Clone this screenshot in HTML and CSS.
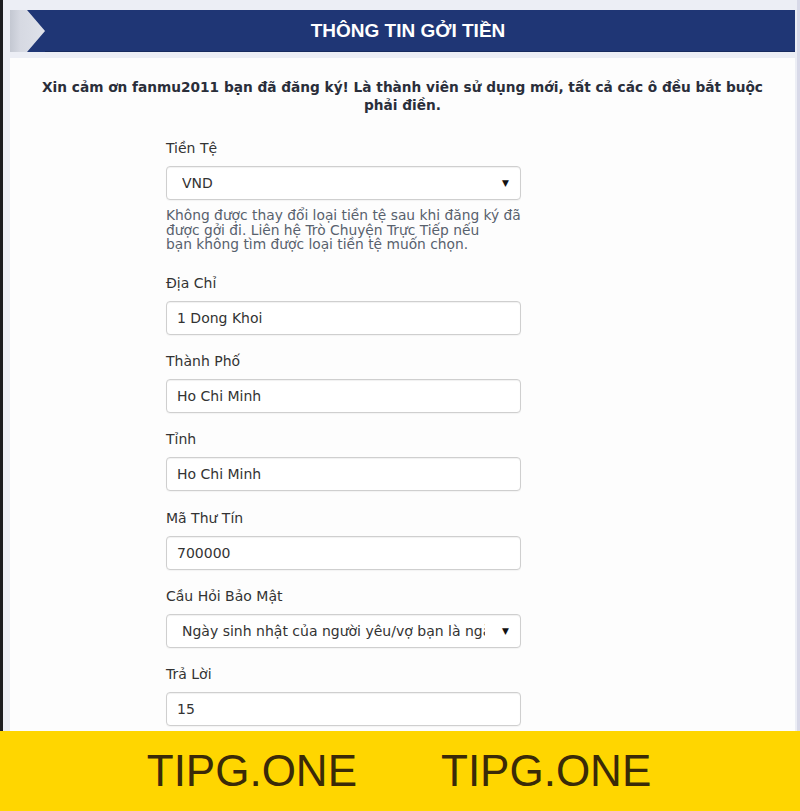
FILE: index.html
```html
<!DOCTYPE html>
<html lang="vi">
<head>
<meta charset="utf-8">
<title>Thông tin gởi tiền</title>
<link rel="stylesheet" href="styles.css">
</head>
<body>
<div class="site">
  <div class="frame">
    <header class="bar">
      <svg class="chev" width="37" height="42" viewBox="0 0 37 42" aria-hidden="true">
        <defs>
          <linearGradient id="cg" x1="0" y1="0" x2="1" y2="0">
            <stop offset="0" stop-color="#c4c8d2"/>
            <stop offset="0.3" stop-color="#d6d9e2"/>
            <stop offset="1" stop-color="#dfe2ea"/>
          </linearGradient>
        </defs>
        <polygon points="2,0 19,0 37,21 19,42 2,42" fill="url(#cg)"/>
        <polygon points="19,0 37,0 37,42 19,42 37,21" fill="#1f3675"/>
      </svg>
      <div class="bar-title"><h1>THÔNG TIN GỞI TIỀN</h1></div>
    </header>
    <main class="panel">
      <p class="intro">Xin cảm ơn fanmu2011 bạn đã đăng ký! Là thành viên sử dụng mới, tất cả các ô đều bắt buộc phải điền.</p>
      <form class="form">
        <div class="field field-help">
          <label class="label">Tiền Tệ</label>
          <div class="select"><span class="select-text">VND</span><span class="arrow">▼</span></div>
          <p class="help">Không được thay đổi loại tiền tệ sau khi đăng ký đã<br>được gởi đi. Liên hệ Trò Chuyện Trực Tiếp nếu<br>bạn không tìm được loại tiền tệ muốn chọn.</p>
        </div>
        <div class="field">
          <label class="label">Địa Chỉ</label>
          <input class="input" type="text" value="1 Dong Khoi">
        </div>
        <div class="field">
          <label class="label">Thành Phố</label>
          <input class="input" type="text" value="Ho Chi Minh">
        </div>
        <div class="field">
          <label class="label">Tỉnh</label>
          <input class="input" type="text" value="Ho Chi Minh">
        </div>
        <div class="field">
          <label class="label">Mã Thư Tín</label>
          <input class="input" type="text" value="700000">
        </div>
        <div class="field">
          <label class="label">Cầu Hỏi Bảo Mật</label>
          <div class="select"><span class="select-text">Ngày sinh nhật của người yêu/vợ bạn là ngày nào?</span><span class="arrow">▼</span></div>
        </div>
        <div class="field">
          <label class="label">Trả Lời</label>
          <input class="input" type="text" value="15">
        </div>
      </form>
    </main>
  </div>
  <footer class="banner">
    <span class="brand">TIPG.ONE</span>
    <span class="brand">TIPG.ONE</span>
  </footer>
</div>
</body>
</html>
```
FILE: styles.css
```css
* { box-sizing: border-box; }
html, body { margin: 0; padding: 0; }
body {
  width: 800px;
  height: 811px;
  overflow: hidden;
  font-family: "DejaVu Sans", Verdana, sans-serif;
  color: #333;
  background: #fff;
}
.site {
  display: flex;
  flex-direction: column;
  height: 811px;
}
.frame {
  height: 731px;
  display: flex;
  flex-direction: column;
  border-left: 3px solid #1c1c20;
  border-right: 3px solid #d8d9e8;
  background: #eceef5;
  padding: 10px 2px 0 5px;
  overflow: hidden;
}
.bar {
  display: flex;
  height: 42px;
  flex: none;
}
.chev { display: block; flex: none; }
.bar-title {
  flex: 1;
  background: #1f3675;
  display: flex;
  align-items: center;
  justify-content: center;
  padding-right: 24px;
  border-bottom: 1px solid #172a5e;
}
.bar-title h1 {
  margin: 0;
  font-family: "Liberation Sans", Arial, sans-serif;
  font-weight: bold;
  font-size: 19px;
  color: #fff;
}
.panel {
  flex: 1;
  margin: 6px 0 0 2px;
  background: #fdfdfd;
  padding-top: 20px;
}
.intro {
  margin: 0 30px;
  text-align: center;
  font-weight: bold;
  font-size: 13.7px;
  line-height: 18px;
  color: #2a2e3a;
}
.form {
  margin: 26px 0 0 156px;
  width: 355px;
}
.field { margin-bottom: 18.4px; }
.label {
  display: block;
  font-size: 14px;
  line-height: 16px;
  height: 16px;
  margin-bottom: 10px;
  color: #333;
}
.input, .select {
  display: flex;
  align-items: center;
  width: 355px;
  height: 34px;
  border: 1px solid #cfcfcf;
  border-radius: 4px;
  background: #fff;
  box-shadow: inset 0 1px 1px rgba(0,0,0,0.06), 0 1px 1px rgba(0,0,0,0.04);
  font-family: "DejaVu Sans", Verdana, sans-serif;
  font-size: 14px;
  color: #333;
}
.input {
  padding: 0 10px;
  outline: none;
}
.select {
  padding: 0 11px 0 15px;
  justify-content: space-between;
}
.select-text {
  flex: 1;
  min-width: 0;
  white-space: nowrap;
  overflow: hidden;
  margin-right: 17px;
}
.arrow {
  font-size: 9px;
  color: #111;
  flex: none;
}
.help {
  margin: 8px 0 23px;
  font-size: 13.8px;
  line-height: 14.5px;
  color: #58616d;
  white-space: nowrap;
}
.field-help { margin-bottom: 0; }
.banner {
  height: 80px;
  background: #ffd600;
  display: flex;
  align-items: center;
  justify-content: center;
  gap: 84px;
  padding-right: 2px;
}
.brand {
  font-family: "Liberation Sans", Arial, sans-serif;
  font-size: 44px;
  color: #3a2a08;
  line-height: 1;
}
```
